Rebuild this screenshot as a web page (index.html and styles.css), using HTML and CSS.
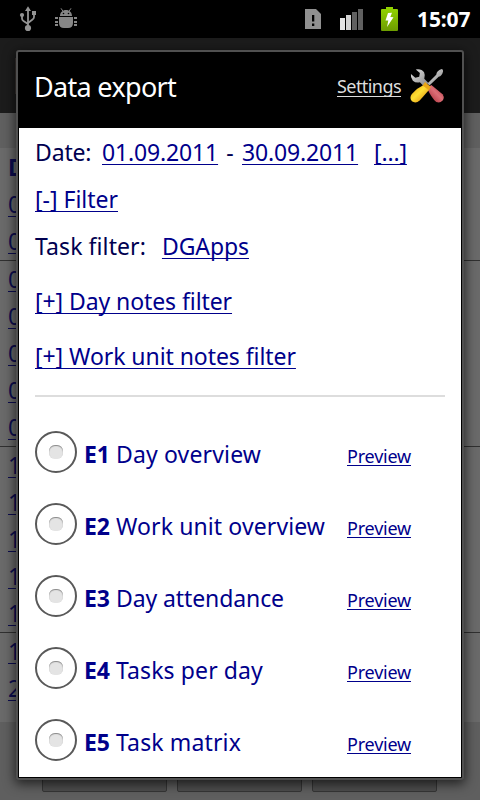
FILE: index.html
```html
<!DOCTYPE html>
<html lang="en">
<head>
<meta charset="utf-8">
<title>Data export</title>
<link rel="stylesheet" href="styles.css">
</head>
<body>
<header class="status">
  <svg class="usb" width="18" height="26" viewBox="0 0 18 26" fill="none" stroke="#939393" stroke-width="1.8">
    <path d="M9 4v18M3 9v3.500q0 1.500 1.500 2.500L9 18M15 8v3q0 1.500-1.500 2.500L9 17"/>
    <path d="M9 .3 12 5H6zM13 5h4v4h-4z" fill="#939393" stroke="none"/>
    <circle cx="3" cy="9" r="2.100" fill="#939393" stroke="none"/><circle cx="9" cy="22" r="3.100" fill="#939393" stroke="none"/>
  </svg>
  <svg class="bug" width="22" height="21" viewBox="0 0 22 21" fill="#868686">
    <path d="M5 8C5 4.500 7.500 2 11 2S17 4.500 17 8zM4 9h14v6q0 5-5 5H9q-5 0-5-5zM0 9h3v2H0zM0 13h3v2H0zM0 16h3v2H0zM19 9h3v2h-3zM19 13h3v2h-3zM19 16h3v2h-3z"/>
    <path d="m6 .3 2 3M16 .3l-2 3" stroke="#868686"/><circle cx="8.500" cy="5.500" r=".8" fill="#000"/><circle cx="13.500" cy="5.500" r=".8" fill="#000"/>
  </svg>
  <svg class="card" width="16" height="20" viewBox="0 0 16 20"><path d="M0 0h11l5 5v15H0z" fill="#909090"/><path d="M7 6h2.300v6.500H7zM7 14.500h2.300V17H7z" fill="#000"/></svg>
  <svg class="signal" width="24" height="21" viewBox="0 0 24 21"><path d="M0 9h5v12H0z" fill="#e4e4e4"/><path d="M6 6h5v15H6z" fill="#d2d2d2"/><path d="M12 3h5v18h-5zM18 0h5v21h-5z" fill="#606060"/></svg>
  <svg class="battery" width="17" height="24" viewBox="0 0 17 24"><defs><linearGradient id="g" x2="0" y2="1"><stop stop-color="#93d500"/><stop offset="1" stop-color="#6d9c00"/></linearGradient></defs><path d="M1 2h4V0h7v2h4q1 0 1 1v20q0 1-1 1H1q-1 0-1-1V3q0-1 1-1z" fill="url(#g)"/><path d="m7 6 4-.2L9.300 10l3.200.2L6 20l1.300-6.500H4.500z" fill="#fff"/></svg>
  <span class="clock">15:07</span>
</header>
<div class="stage">
  <main class="page">
    <div class="appbar"><i class="appicon"></i></div>
    <div class="subbar"></div>
    <div class="sheet">
      <div class="dayhead">D</div>
      <div class="group"><u>0</u><u>0</u></div>
      <div class="group"><u>0</u><u>0</u><u>0</u><u>0</u><u>0</u></div>
      <div class="group"><u>1</u><u>1</u><u>1</u><u>1</u><u>1</u></div>
      <div class="group last"><u>1</u><u>2</u></div>
    </div>
    <div class="buttons"><i></i><i></i><i></i></div>
  </main>
  <section class="dialog">
    <div class="titlebar">
      <h1>Data export</h1>
      <a class="settings">Settings</a>
      <svg class="tools" width="37" height="37" viewBox="0 0 38 38">
        <defs>
          <linearGradient id="y" x2="1" y2="1"><stop stop-color="#e89a10"/><stop offset=".45" stop-color="#ffe034"/><stop offset="1" stop-color="#d87806"/></linearGradient>
          <linearGradient id="r" x1="1" x2="0" y2="1"><stop stop-color="#a52b38"/><stop offset=".45" stop-color="#dc6f77"/><stop offset="1" stop-color="#a01f2b"/></linearGradient>
          <linearGradient id="s" x2="1" y2="1"><stop stop-color="#e2e2e2"/><stop offset="1" stop-color="#858585"/></linearGradient>
        </defs>
        <path d="M20 17 29 8Q29.500 3.500 34.500 2q2 .5 1.500 2.500Q35 9 31.500 10L22 19z" fill="url(#s)"/>
        <path d="M8 2.500q6-1 8.500 3 1.500 3 .2 6.500l4.300 4.500-4.500 3.500-4.300-4.300q-4.200 1-7.200-1.700Q2.300 11 3 7.300l4.500 3.800 4-1 .7-4z" fill="url(#s)"/>
        <path d="M19.500 21.500 24 18.500 35.500 28q2.500 3.500 0 6.500t-6.500 1.500q-5-4.500-9.500-14.500z" fill="url(#r)"/>
        <path d="M16 18.500 22 23 12 34.500q-4 3.500-8 .8-3-3.800 0-7.600 5-6 12-9.200z" fill="url(#y)"/>
        <path d="m17.500 15.500 6 5-2 3.500-6.500-5z" fill="#eaa616"/>
      </svg>
    </div>
    <div class="content">
      <div class="row date"><span class="l-date">Date:</span><a class="d1">01.09.2011</a><span class="dash">-</span><a class="d2">30.09.2011</a><a class="more">[...]</a></div>
      <div class="row filter"><a>[-] Filter</a></div>
      <div class="row task"><span>Task filter:</span><a class="apps">DGApps</a></div>
      <div class="row daynotes"><a>[+] Day notes filter</a></div>
      <div class="row worknotes"><a>[+] Work unit notes filter</a></div>
      <hr>
      <div class="option"><i class="radio"></i><span class="name t1"><b>E1</b>Day overview</span><a class="preview">Preview</a></div>
      <div class="option"><i class="radio"></i><span class="name t2"><b>E2</b>Work unit overview</span><a class="preview">Preview</a></div>
      <div class="option"><i class="radio"></i><span class="name t3"><b>E3</b>Day attendance</span><a class="preview">Preview</a></div>
      <div class="option"><i class="radio"></i><span class="name t4"><b>E4</b>Tasks per day</span><a class="preview">Preview</a></div>
      <div class="option"><i class="radio"></i><span class="name t5"><b>E5</b>Task matrix</span><a class="preview">Preview</a></div>
    </div>
  </section>
</div>
</body>
</html>
```
FILE: styles.css
```css
* { box-sizing: border-box; }
body { margin: 0; width: 480px; height: 800px; overflow: hidden; background: #5f5f5f; font: 23px/28px "Noto Sans", "Open Sans", sans-serif; color: #000050; }
a, u { text-decoration: underline 1px; text-underline-offset: 3px; text-decoration-skip-ink: none; }
a { color: #00008b; white-space: nowrap; }

.status { display: flex; align-items: flex-start; height: 38px; padding-left: 19px; background: #000; }
.status svg { flex: none; }
.usb { margin-top: 6px; }
.bug { margin: 8px 0 0 18px; }
.card { margin: 9px 0 0 228px; }
.signal { margin: 9px 0 0 19px; }
.battery { margin: 7px 0 0 17px; }
.clock { margin: 5px 0 0 19px; font-size: 21px; font-weight: 700; color: #fff; letter-spacing: -.1px; }

.stage { position: relative; height: 762px; overflow: hidden; }
.appbar { height: 75px; padding: 20px 0 0 15px; background: #1c1c1c; }
.appicon { display: block; width: 20px; height: 36px; background: #3a3432; }
.subbar { height: 35px; background: #606060; }
.sheet { height: 574px; background: #6a6a6a; color: #0c0c50; }
.dayhead { height: 38px; padding: 5px 0 0 8px; font-weight: 700; }
.group { border-bottom: 1px solid #303030; }
.group.last { border: 0; }
.group u { display: block; height: 37px; padding: 4px 0 0 8px; }
.buttons { display: flex; gap: 10px; height: 78px; padding: 10px 0 8px 42px; background: #5f5f5f; }
.buttons i { width: 125px; background: #4e4e4e; border: 1px solid #363636; border-radius: 2px; }

.dialog { position: absolute; left: 16px; top: 12px; width: 448px; height: 730px; padding: 0 1px 1px; background: #000; border: 2px solid #505050; border-radius: 3px; box-shadow: 0 3px 12px 1px rgba(0, 0, 0, .65); }
.titlebar { display: flex; height: 76px; padding: 0 14px 0 15px; background: #000; }
h1 { margin: 18px 0 0; width: 303px; font: 27px/34px "Noto Sans", sans-serif; letter-spacing: -.68px; color: #fff; white-space: nowrap; }
.settings { width: 64px; margin-top: 20px; font-size: 18px; letter-spacing: -.56px; color: #ddd; text-underline-offset: 3px; }
.tools { margin: 15px 0 0 7px; flex: none; }

.content { height: 649px; padding: 10px 16px 0; background: #fff; }
.row { display: flex; height: 28px; white-space: nowrap; }
.date { letter-spacing: -.15px; }
.l-date { width: 67px; }
.d1 { width: 116px; }
.dash { width: 24px; text-align: center; }
.d2 { width: 116px; }
.more { margin-left: 16px; }
.filter { margin-top: 19px; letter-spacing: -.01px; }
.task { margin-top: 19px; letter-spacing: .09px; }
.apps { margin-left: 16px; letter-spacing: -.08px; }
.daynotes { margin-top: 27px; letter-spacing: -.08px; }
.worknotes { margin-top: 27px; letter-spacing: -.06px; }
hr { height: 2px; margin: 25px 0 20px; border: 0; background: #ddd; }
.option { display: flex; height: 72px; padding-top: 14px; }
.radio { display: grid; place-items: center; flex: none; width: 42px; height: 42px; border: 2px solid #595959; border-radius: 50%; }
.radio::after { content: ""; width: 14px; height: 14px; border-radius: 6px; background: #e4e4e4; box-shadow: inset 0 1px 1px #888; }
.name { width: 263px; margin: 9px 0 0 7px; white-space: nowrap; color: #00008b; }
.name b { display: inline-block; width: 32px; letter-spacing: -.1px; }
.t1 { letter-spacing: .15px; }
.t2 { letter-spacing: .11px; }
.t3 { letter-spacing: -.1px; }
.t4 { letter-spacing: .11px; }
.t5 { letter-spacing: .14px; }
.preview { margin-top: 11px; font-size: 18px; letter-spacing: -.21px; text-underline-offset: 2px; }
```
